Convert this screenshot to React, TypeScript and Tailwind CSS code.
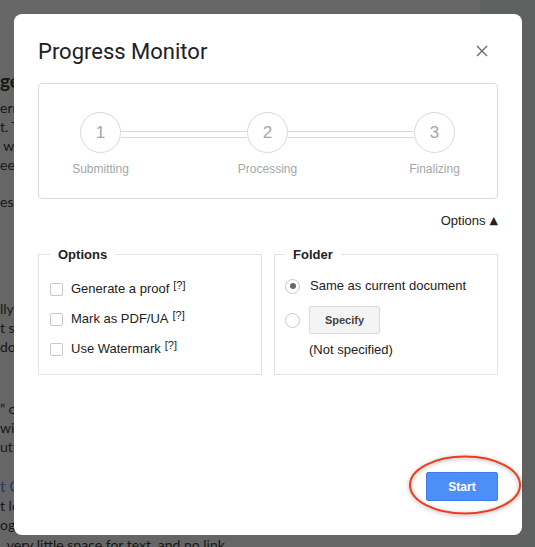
import React from "react";

function Step({ n, label }: { n: number; label: string }) {
  return (
    <div className="w-[41px] flex flex-col items-center shrink-0">
      <div className="w-[41px] h-[41px] rounded-full border border-[#d8d8d8] flex items-center justify-center text-[17px] text-[#a6a6a6]">
        {n}
      </div>
      <div className="mt-[9px] whitespace-nowrap text-[12px] leading-[15px] text-[#a6a6a6]">{label}</div>
    </div>
  );
}

function Line() {
  return <div className="flex-1 self-start mt-[19px] h-[7px] border-y border-[#d8d8d8] bg-white" />;
}

function Check({ label }: { label: string }) {
  return (
    <div className="h-[30px] flex items-center">
      <div className="w-[13px] h-[13px] border border-[#c8c8c8] rounded-[2px] bg-white shrink-0" />
      <span className="ml-[8px] text-[13px] text-[#222] whitespace-nowrap">
        {label}
        <span className="ml-[4px] text-[11px] relative -top-[4px]">[?]</span>
      </span>
    </div>
  );
}

export default function App() {
  return (
    <div className="relative w-[535px] h-[547px] overflow-hidden bg-[#666666] flex font-['Liberation_Sans',Arial,sans-serif]">
      {/* dimmed document behind */}
      <div className="w-[480px] h-full shrink-0 font-['Lato',sans-serif] text-[#171717] text-[14px] leading-[19px] whitespace-nowrap pt-[69px]">
        <div className="h-[24px] leading-[24px] text-[19px] font-bold">ge Settings</div>
        <div className="mt-[5px]">ern document formats are supported</div>
        <div>t. The converter</div>
        <div>&nbsp;will process each page</div>
        <div>eed to finish</div>
        <div className="mt-[18px]">es shown here</div>
        <div className="mt-[88px]">lly the output</div>
        <div>t stays the same</div>
        <div>do not change</div>
        <div className="mt-[43px]">” option</div>
        <div>will appear</div>
        <div>ut when</div>
        <div className="mt-[20px] h-[20px] leading-[20px] text-[15px] text-[#1f3b66]">t Options</div>
        <div>t leaves</div>
        <div>og window</div>
        <div className="mt-[1px]">&nbsp;&nbsp;very little space for text, and no link</div>
      </div>
      <div className="flex-1 h-full bg-[#5f6160]" />

      {/* dialog */}
      <div className="absolute left-[14px] top-[14px] w-[508px] h-[521px] bg-white rounded-[8px] flex flex-col px-6 pt-6 pb-[34px]">
        <div className="flex items-center justify-between h-[28px]">
          <div className="font-['Roboto',sans-serif] text-[22px] leading-[28px] text-[#202124]">Progress Monitor</div>
          <svg width="12" height="12" viewBox="0 0 12 12" className="mr-[10px] -mt-[3px]">
            <path d="M1 1 L11 11 M11 1 L1 11" stroke="#6b6b6b" strokeWidth="1.4" fill="none" />
          </svg>
        </div>

        <div className="mt-[17px] h-[116px] border border-[#dadada] rounded-[4px] pt-[28px] pl-[41px] pr-[42px] flex items-start">
          <Step n={1} label="Submitting" />
          <Line />
          <Step n={2} label="Processing" />
          <Line />
          <Step n={3} label="Finalizing" />
        </div>

        <div className="mt-[14px] h-[16px] flex justify-end items-center text-[13px] text-[#222]">
          Options <span className="ml-[4px] text-[11px] font-['DejaVu_Sans',sans-serif]">▲</span>
        </div>

        <div className="mt-[18px] grid grid-cols-2 gap-[12px]">
          <fieldset className="h-[128px] border border-[#e3e3e3] pl-[11px] pt-[12px]">
            <legend className="px-2 text-[13px] leading-[15px] font-bold text-[#222]">Options</legend>
            <Check label="Generate a proof" />
            <Check label="Mark as PDF/UA" />
            <Check label="Use Watermark" />
          </fieldset>
          <fieldset className="h-[128px] border border-[#e3e3e3] pl-[10px] pt-[14px]">
            <legend className="px-2 text-[13px] leading-[15px] font-bold text-[#222]">Folder</legend>
            <div className="h-[20px] flex items-center">
              <div className="w-[15px] h-[15px] rounded-full border border-[#c8c8c8] flex items-center justify-center shrink-0">
                <div className="w-[6px] h-[6px] rounded-full bg-[#6a6a6a]" />
              </div>
              <span className="ml-[10px] text-[13px] text-[#222]">Same as current document</span>
            </div>
            <div className="mt-[10px] flex items-center">
              <div className="w-[15px] h-[15px] rounded-full border border-[#c8c8c8] shrink-0" />
              <div className="ml-[9px] w-[71px] h-[28px] border border-[#dcdcdc] bg-[#f3f3f3] rounded-[2px] flex items-center justify-center text-[11px] font-bold text-[#444]">
                Specify
              </div>
            </div>
            <div className="mt-[8px] ml-[24px] h-[16px] leading-[16px] text-[13px] text-[#222]">(Not specified)</div>
          </fieldset>
        </div>

        <div className="mt-auto flex justify-end">
          <div className="w-[72px] h-[29px] bg-[#4d8ff8] border border-[#3d7fe8] rounded-[2px] flex items-center justify-center text-white text-[12px] font-bold">
            Start
          </div>
        </div>
      </div>

      {/* red annotation ellipse */}
      <svg
        className="absolute left-[407px] top-[454px] drop-shadow-[0_1px_2px_rgba(0,0,0,0.35)]"
        width="116"
        height="62"
        viewBox="0 0 116 62"
      >
        <ellipse cx="58" cy="31" rx="55" ry="28.5" fill="none" stroke="#f23a1d" strokeWidth="2" />
      </svg>
    </div>
  );
}
